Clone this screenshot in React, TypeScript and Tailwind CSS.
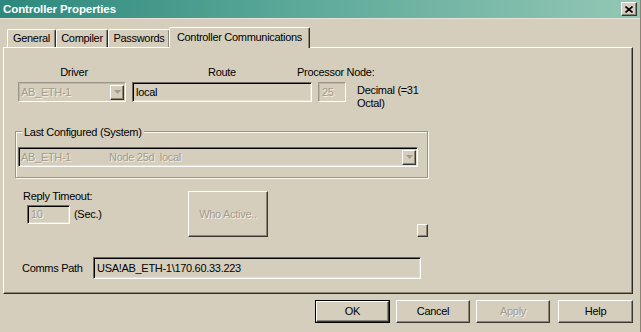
import React from "react";

const sunken =
  "border border-t-[#6f6a60] border-l-[#6f6a60] border-b-white border-r-white shadow-[inset_1px_1px_0_#000,inset_-1px_-1px_0_#e4ddd0]";
const sunkenDisabled =
  "border border-t-[#9d968a] border-l-[#9d968a] border-b-white border-r-white shadow-[inset_1px_1px_0_#bdb5a6]";
const raised =
  "border border-t-white border-l-white border-b-[#3a3832] border-r-[#3a3832] shadow-[inset_-1px_-1px_0_#8c8679]";
const disabledText = "text-[#a39b8d] [text-shadow:1px_1px_0_#f4efe6]";

function ArrowBox() {
  return (
    <div className={`w-[14px] h-[15px] flex items-center justify-center bg-[#d6cebd] ${raised}`}>
      <svg width="7" height="4" viewBox="0 0 7 4">
        <path d="M0 0h7L3.5 4z" fill="#a39b8d" />
      </svg>
    </div>
  );
}

function Tab({ label, w }: { label: string; w: string }) {
  return (
    <div
      className={`${w} h-[18px] pt-[2px] text-center border-t border-l border-t-white border-l-white border-r border-r-[#2e2c28] rounded-t-[2px] shadow-[inset_-1px_0_0_#8c8679]`}
    >
      {label}
    </div>
  );
}

function Button({ label, w, isDefault, disabled, cls = "" }: { label: string; w: string; isDefault?: boolean; disabled?: boolean; cls?: string }) {
  if (isDefault) {
    return (
      <div className={`${w} h-[23px] border border-black ${cls}`}>
        <div className="h-full flex items-center justify-center border border-t-white border-l-white border-b-[#3a3832] border-r-[#3a3832] shadow-[inset_-1px_-1px_0_#8c8679]">
          {label}
        </div>
      </div>
    );
  }
  return (
    <div className={`${w} h-[23px] flex items-center justify-center ${raised} ${disabled ? disabledText : ""} ${cls}`}>
      {label}
    </div>
  );
}

export default function App() {
  return (
    <div className="w-[641px] h-[332px] overflow-hidden bg-[#d6cebd] text-black font-['Liberation_Sans',Arial,sans-serif] text-[11px] leading-[13px] tracking-[-0.3px] flex flex-col border-r border-r-[#8a8478]">
      {/* title bar */}
      <div className="h-[19px] shrink-0 flex items-center justify-between pl-[3px] pr-[3px] bg-[linear-gradient(90deg,#2c887c_0%,#5aa898_45%,#94c7b5_100%)] border-b border-b-[#e8e2d6]">
        <span className="text-white font-bold tracking-[-0.1px] text-[11.5px]">Controller Properties</span>
        <div className={`w-[16px] h-[14px] flex items-center justify-center bg-[#d6cebd] ${raised}`}>
          <svg width="8" height="7" viewBox="0 0 8 7">
            <path d="M0.5 0.5L7.5 6.5M7.5 0.5L0.5 6.5" stroke="#000" strokeWidth="1.6" />
          </svg>
        </div>
      </div>

      {/* tabs */}
      <div className="mt-[8px] h-[20px] pl-[7px] flex items-end">
        <Tab label="General" w="w-[49px]" />
        <Tab label="Compiler" w="w-[52px]" />
        <Tab label="Passwords" w="w-[62px]" />
        <div className="relative z-10 ml-[-1px] mb-[-1px] w-[141px] h-[21px] pt-[3px] text-center bg-[#d6cebd] border-t border-l border-t-white border-l-white border-r border-r-[#2e2c28] rounded-t-[2px] shadow-[inset_-1px_0_0_#8c8679]">
          Controller Communications
        </div>
      </div>

      {/* panel */}
      <div className="ml-[3px] w-[630px] h-[247px] flex flex-col border border-t-white border-l-white border-b-[#2e2c28] border-r-[#2e2c28] shadow-[inset_-1px_-1px_0_#8c8679]">
        {/* labels row */}
        <div className="mt-[18px] flex">
          <div className="ml-[14px] w-[108px] text-center pl-[4px]">Driver</div>
          <div className="ml-[6px] w-[180px] text-center">Route</div>
          <div className="ml-[-15px] whitespace-nowrap">Processor Node:</div>
        </div>

        {/* inputs row */}
        <div className="mt-[3px] h-[20px] flex items-start">
          <div className={`ml-[14px] w-[108px] h-[20px] flex items-center justify-between pl-[2px] pr-[1px] ${sunkenDisabled}`}>
            <span className={disabledText}>AB_ETH-1</span>
            <ArrowBox />
          </div>
          <div className={`ml-[6px] w-[180px] h-[20px] flex items-center pl-[3px] ${sunken}`}>local</div>
          <div className={`ml-[6px] w-[28px] h-[20px] flex items-center pl-[3px] ${sunkenDisabled}`}>
            <span className={disabledText}>25</span>
          </div>
          <div className="ml-[11px] mt-[2px] w-[80px]">
            Decimal (=31
            <br />
            Octal)
          </div>
        </div>

        {/* group box */}
        <div className="ml-[11px] mt-[29px] w-[413px] flex flex-col border border-[#9a9486] shadow-[inset_1px_1px_0_#fffaf0,1px_1px_0_#fffaf0]">
          <div className="mt-[-6px] ml-[6px] w-fit px-[2px] bg-[#d6cebd]">Last Configured (System)</div>
          <div className={`ml-[2px] mt-[8px] mb-[10px] w-[400px] h-[20px] flex items-center pl-[2px] pr-[1px] ${sunken}`}>
            <span className={`w-[88px] ${disabledText}`}>AB_ETH-1</span>
            <span className={`flex-1 ${disabledText}`}>Node 25d&nbsp;&nbsp;local</span>
            <ArrowBox />
          </div>
        </div>

        {/* reply timeout row */}
        <div className="mt-[12px] flex items-start">
          <div className="ml-[19px] w-[165px] flex flex-col">
            <div>Reply Timeout:</div>
            <div className="mt-[2px] flex items-center">
              <div className={`ml-[4px] w-[43px] h-[19px] flex items-center pl-[3px] ${sunken}`}>
                <span className={disabledText}>10</span>
              </div>
              <span className="ml-[4px]">(Sec.)</span>
            </div>
          </div>
          <div className={`mt-[1px] w-[80px] h-[46px] flex items-center justify-center ${raised} ${disabledText}`}>
            Who Active..
          </div>
          <div className={`ml-[149px] mt-[34px] w-[11px] h-[13px] ${raised}`} />
        </div>

        {/* comms path row */}
        <div className="mt-[20px] flex items-center">
          <div className="ml-[18px] w-[71px]">Comms Path</div>
          <div className={`w-[328px] h-[22px] flex items-center pl-[3px] ${sunken}`}>USA!AB_ETH-1\170.60.33.223</div>
        </div>
      </div>

      {/* dialog buttons */}
      <div className="mt-[6px] pl-[315px] flex">
        <Button label="OK" w="w-[75px]" isDefault />
        <Button label="Cancel" w="w-[74px]" cls="ml-[6px]" />
        <Button label="Apply" w="w-[74px]" cls="ml-[6px]" disabled />
        <Button label="Help" w="w-[75px]" cls="ml-[8px]" />
      </div>
    </div>
  );
}
